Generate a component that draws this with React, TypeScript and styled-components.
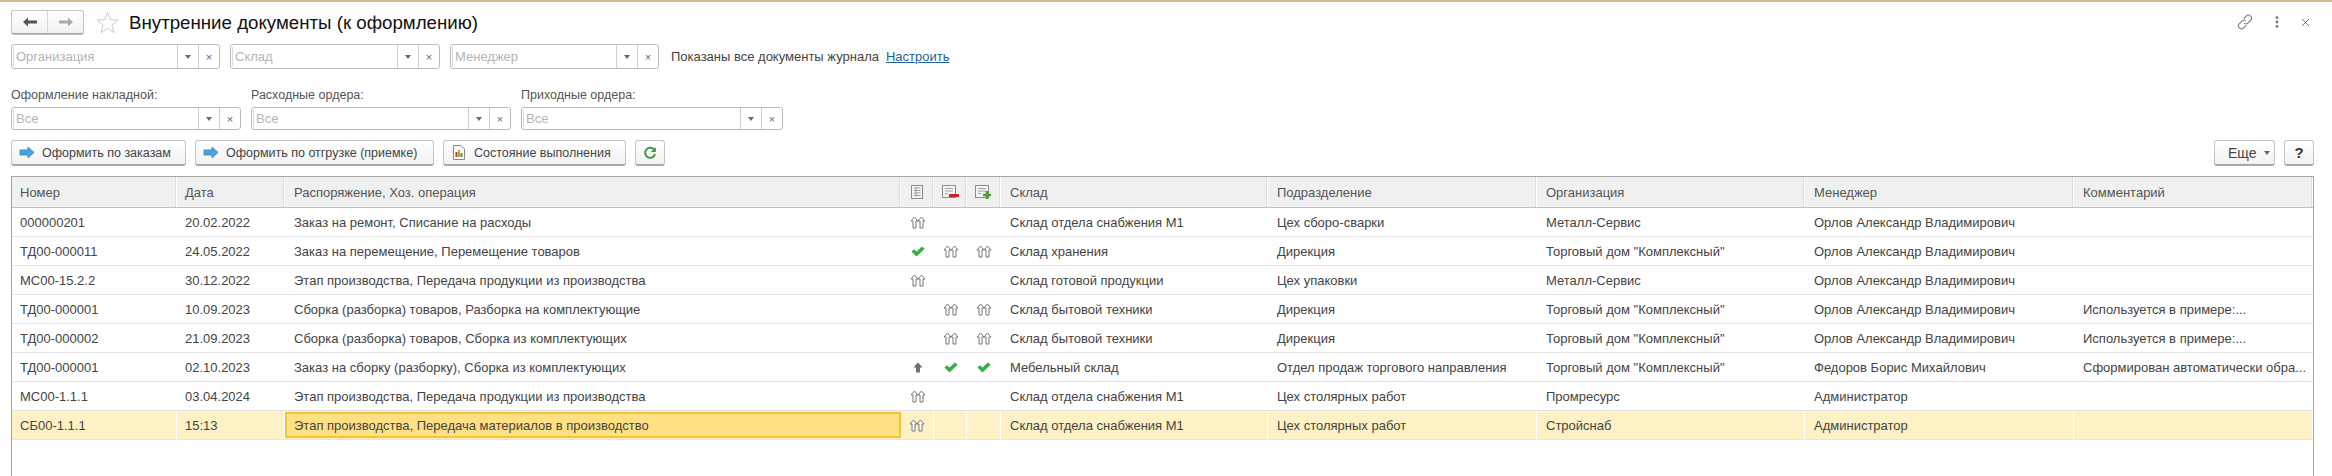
import React from "react";
import styled, { createGlobalStyle } from "styled-components";

const GlobalStyle = createGlobalStyle`
  html, body { margin: 0; padding: 0; background: #fff; }
  body { font-family: "Liberation Sans", Arial, sans-serif; font-size: 13px; color: #444; }
`;

const Page = styled.div`
  width: 2332px;
  height: 476px;
  box-sizing: border-box;
  border-top: 2px solid #c9bb94;
  padding: 8px 18px 0 11px;
  display: flex;
  flex-direction: column;
  overflow: hidden;
`;

const TitleRow = styled.div`
  height: 24px;
  display: flex;
  align-items: center;
`;

const NavGroup = styled.div`
  width: 73px;
  height: 24px;
  box-sizing: border-box;
  display: flex;
  border: 1px solid #c4c4c4;
  border-bottom-color: #a8a8a8;
  border-radius: 3px;
  background: linear-gradient(#fff, #f1f1f1);
  box-shadow: 0 1px 0 #bbb;
`;

const NavButton = styled.div<{ $divider?: boolean }>`
  flex: 1;
  display: flex;
  align-items: center;
  justify-content: center;
  border-right: ${(p) => (p.$divider ? "1px solid #d6d6d6" : "none")};
`;

const StarWrap = styled.div`
  margin-left: 12px;
  width: 23px;
  height: 23px;
`;

const Title = styled.h1`
  margin: 2px 0 0 10px;
  font-size: 18.7px;
  font-weight: 400;
  color: #111;
  white-space: nowrap;
`;

const TopIcons = styled.div`
  margin-left: auto;
  display: flex;
  align-items: center;
  gap: 22px;
  margin-right: 4px;
`;

const FilterRow = styled.div`
  margin-top: 10px;
  height: 25px;
  display: flex;
  align-items: center;
  gap: 10px;
`;

const FieldBox = styled.div<{ $width: number; $height: number }>`
  width: ${(p) => p.$width}px;
  height: ${(p) => p.$height}px;
  box-sizing: border-box;
  display: flex;
  border: 1px solid #bcbcbc;
  border-radius: 3px;
  background: #fff;
`;

const FieldText = styled.div`
  flex: 1;
  min-width: 0;
  padding-left: 2px;
  display: flex;
  align-items: center;
  color: #b4b4b4;
  border-left: 1px solid #d8d8d8;
  margin: 2px 0 2px 1px;
`;

const FieldBtn = styled.div`
  width: 20px;
  display: flex;
  align-items: center;
  justify-content: center;
  border-left: 1px solid #cfcfcf;
  color: #666;
  font-size: 11px;
`;

const Caret = styled.span`
  width: 0;
  height: 0;
  border-left: 3px solid transparent;
  border-right: 3px solid transparent;
  border-top: 4px solid #666;
`;

const StatusText = styled.span`
  margin-left: 2px;
  color: #444;
  white-space: nowrap;
`;

const SetupLink = styled.a`
  margin-left: -3px;
  color: #1f5f99;
  text-decoration: underline;
`;

const OrderRow = styled.div`
  margin-top: 19px;
  display: flex;
  gap: 10px;
`;

const OrderGroup = styled.div`
  display: flex;
  flex-direction: column;
  gap: 4px;
`;

const OrderLabel = styled.label`
  height: 15px;
  line-height: 15px;
  font-size: 12.5px;
  color: #555;
`;

const ActionRow = styled.div`
  margin-top: 10px;
  height: 26px;
  display: flex;
  gap: 9px;
`;

const ActionButton = styled.div<{ $width: number; $pad?: number }>`
  width: ${(p) => p.$width}px;
  box-sizing: border-box;
  display: flex;
  align-items: center;
  justify-content: ${(p) => (p.$pad === undefined ? "center" : "flex-start")};
  padding-left: ${(p) => p.$pad ?? 0}px;
  gap: 7px;
  border: 1px solid #c4c4c4;
  border-bottom: 2px solid #a9a9a9;
  border-radius: 3px;
  background: linear-gradient(#fff, #f3f3f3);
  font-size: 12.5px;
  color: #444;
  white-space: nowrap;
`;

const IconSlot = styled.span`
  width: 16px;
  display: flex;
  align-items: center;
  justify-content: center;
`;

const Spacer = styled.div`
  flex: 1;
`;

const MoreLabel = styled.span`
  font-size: 14px;
`;

const QuestionMark = styled.span`
  font-size: 15px;
  font-weight: 700;
  color: #333;
`;

const Table = styled.div`
  margin-top: 10px;
  flex: 1;
  border: 1px solid #a6a6a6;
  border-bottom: none;
`;

const columns = "165px 108px 616px 33px 33px 34px 267px 269px 268px 269px 1fr";

const HeaderRow = styled.div`
  display: grid;
  grid-template-columns: ${columns};
  height: 31px;
  background: #f0f0f0;
  border-bottom: 1px solid #c0c0c0;
  box-sizing: border-box;
`;

const HeadCell = styled.div<{ $icon?: boolean }>`
  box-sizing: border-box;
  display: flex;
  align-items: center;
  justify-content: ${(p) => (p.$icon ? "center" : "flex-start")};
  padding-left: ${(p) => (p.$icon ? 0 : 9)}px;
  border-right: 1px solid #fff;
  box-shadow: inset -1px 0 0 #dcdcdc;
  color: #555;

  &:nth-child(-n + 2) {
    padding-left: 8px;
  }
`;

const Row = styled.div<{ $current?: boolean }>`
  display: grid;
  grid-template-columns: ${columns};
  height: 29px;
  box-sizing: border-box;
  border-bottom: 1px solid #e4e4e4;
  background: ${(p) => (p.$current ? "#fdf1c5" : "#fff")};
`;

const Cell = styled.div<{ $icon?: boolean; $current?: boolean; $active?: boolean }>`
  box-sizing: border-box;
  min-width: 0;
  display: flex;
  align-items: center;
  justify-content: ${(p) => (p.$icon ? "center" : "flex-start")};
  padding-left: ${(p) => (p.$icon ? 0 : 9)}px;
  white-space: nowrap;
  overflow: hidden;
  border-right: ${(p) => (p.$current ? "1px solid #fff" : "none")};

  &:nth-child(-n + 2) {
    padding-left: 8px;
  }

  ${(p) =>
    p.$active &&
    `
    background: #ffe083;
    border: 2px solid #f0c73a;
    padding-left: 7px;
    margin: 1px 0;
    color: #444;
  `}
`;

type Mark = "" | "open" | "done" | "up";

interface DocRow {
  num: string;
  date: string;
  order: string;
  marks: [Mark, Mark, Mark];
  wh: string;
  dep: string;
  org: string;
  man: string;
  note: string;
}

const rows: DocRow[] = [
  { num: "000000201", date: "20.02.2022", order: "Заказ на ремонт, Списание на расходы", marks: ["open", "", ""], wh: "Склад отдела снабжения М1", dep: "Цех сборо-сварки", org: "Металл-Сервис", man: "Орлов Александр Владимирович", note: "" },
  { num: "ТД00-000011", date: "24.05.2022", order: "Заказ на перемещение, Перемещение товаров", marks: ["done", "open", "open"], wh: "Склад хранения", dep: "Дирекция", org: 'Торговый дом "Комплексный"', man: "Орлов Александр Владимирович", note: "" },
  { num: "МС00-15.2.2", date: "30.12.2022", order: "Этап производства, Передача продукции из производства", marks: ["open", "", ""], wh: "Склад готовой продукции", dep: "Цех упаковки", org: "Металл-Сервис", man: "Орлов Александр Владимирович", note: "" },
  { num: "ТД00-000001", date: "10.09.2023", order: "Сборка (разборка) товаров, Разборка на комплектующие", marks: ["", "open", "open"], wh: "Склад бытовой техники", dep: "Дирекция", org: 'Торговый дом "Комплексный"', man: "Орлов Александр Владимирович", note: "Используется в примере:..." },
  { num: "ТД00-000002", date: "21.09.2023", order: "Сборка (разборка) товаров, Сборка из комплектующих", marks: ["", "open", "open"], wh: "Склад бытовой техники", dep: "Дирекция", org: 'Торговый дом "Комплексный"', man: "Орлов Александр Владимирович", note: "Используется в примере:..." },
  { num: "ТД00-000001", date: "02.10.2023", order: "Заказ на сборку (разборку), Сборка из комплектующих", marks: ["up", "done", "done"], wh: "Мебельный склад", dep: "Отдел продаж торгового направления", org: 'Торговый дом "Комплексный"', man: "Федоров Борис Михайлович", note: "Сформирован автоматически обра..." },
  { num: "МС00-1.1.1", date: "03.04.2024", order: "Этап производства, Передача продукции из производства", marks: ["open", "", ""], wh: "Склад отдела снабжения М1", dep: "Цех столярных работ", org: "Промресурс", man: "Администратор", note: "" },
  { num: "СБ00-1.1.1", date: "15:13", order: "Этап производства, Передача материалов в производство", marks: ["open", "", ""], wh: "Склад отдела снабжения М1", dep: "Цех столярных работ", org: "Стройснаб", man: "Администратор", note: "" },
];

const ArrowNav = ({ dir, color }: { dir: "left" | "right"; color: string }) => (
  <svg width="16" height="12" viewBox="0 0 16 12">
    <path
      d={dir === "left" ? "M1 6 L6 1.5 V4.5 H15 V7.5 H6 V10.5 Z" : "M15 6 L10 1.5 V4.5 H1 V7.5 H10 V10.5 Z"}
      fill={color}
    />
  </svg>
);

const Star = () => (
  <svg width="23" height="23" viewBox="0 0 23 23">
    <path
      d="M11.5 1.5 L14.3 8.6 L22 9.1 L16 14 L18 21.6 L11.5 17.4 L5 21.6 L7 14 L1 9.1 L8.7 8.6 Z"
      fill="#fff"
      stroke="#c9c9c9"
    />
  </svg>
);

const LinkIcon = () => (
  <svg width="16" height="16" viewBox="0 0 16 16" fill="none" stroke="#777" strokeWidth="1.1">
    <path d="M6.8 4.6 L9.6 1.8 a2.5 2.5 0 0 1 3.9 0.4 L14 2.6 a2.6 2.6 0 0 1 0 3.4 L10.8 9.2 a2.4 2.4 0 0 1 -3.5 0" />
    <path d="M9.2 11.4 L6.4 14.2 a2.5 2.5 0 0 1 -3.9 -0.4 L2 13.4 a2.6 2.6 0 0 1 0 -3.4 L5.2 6.8 a2.4 2.4 0 0 1 3.5 0" />
  </svg>
);

const DotsIcon = () => (
  <svg width="4" height="12" viewBox="0 0 4 12" fill="#777">
    <circle cx="2" cy="1.6" r="1.4" />
    <circle cx="2" cy="6" r="1.4" />
    <circle cx="2" cy="10.4" r="1.4" />
  </svg>
);

const CloseIcon = () => (
  <svg width="9" height="9" viewBox="0 0 9 9" stroke="#777" strokeWidth="1">
    <path d="M1 1 L8 8 M8 1 L1 8" />
  </svg>
);

const BlueArrow = () => (
  <svg width="16" height="13" viewBox="0 0 16 13">
    <path d="M1 4 H9 V1 L15 6.5 L9 12 V9 H1 Z" fill="#4aa3dc" stroke="#3280b8" strokeWidth="0.8" />
  </svg>
);

const ReportIcon = () => (
  <svg width="12" height="15" viewBox="0 0 12 15">
    <path d="M0.5 0.5 H8 L11.5 4 V14.5 H0.5 Z" fill="#fff" stroke="#8a8a8a" />
    <rect x="2.5" y="7" width="2" height="5" fill="#c33" />
    <rect x="5" y="5" width="2" height="7" fill="#c9a227" />
    <rect x="7.5" y="8" width="2" height="4" fill="#3a9a3a" />
  </svg>
);

const RefreshIcon = () => (
  <svg width="14" height="14" viewBox="0 0 14 14" fill="none">
    <path d="M11.4 4.2 A5 5 0 1 0 12 8" stroke="#3c9a3c" strokeWidth="2" />
    <path d="M12.8 1 V6 H7.8 Z" fill="#3c9a3c" />
  </svg>
);

const ColIconBase = ({ sign }: { sign?: "minus" | "plus" }) => (
  <svg width="17" height="14" viewBox="0 0 17 14">
    <rect x="0.5" y="0.5" width="13" height="12" fill="#f6f6f6" stroke="#8c8c8c" />
    <path d="M3 3.5 H11 M3 6 H11 M3 8.5 H6" stroke="#a0a0a0" />
    {sign === "minus" && <rect x="7" y="9" width="10" height="3" fill="#c8242b" />}
    {sign === "plus" && <path d="M12 6 V14 M8 10 H16" stroke="#4aa02c" strokeWidth="2.6" />}
  </svg>
);

const ColIconGrid = () => (
  <svg width="12" height="14" viewBox="0 0 12 14">
    <rect x="0.5" y="0.5" width="11" height="13" fill="#f6f6f6" stroke="#8c8c8c" />
    <path d="M2.5 3 H9.5 M2.5 5.5 H9.5 M2.5 8 H9.5 M2.5 10.5 H9.5 M5 2.5 V11.5" stroke="#a0a0a0" />
  </svg>
);

const DoubleUp = () => (
  <svg width="16" height="13" viewBox="0 0 16 13" fill="#fff" stroke="#777" strokeWidth="1">
    <path d="M4.5 1 L8 5 H6 V12 H3 V5 H1 Z" />
    <path d="M11.5 1 L15 5 H13 V12 H10 V5 H8 Z" />
  </svg>
);

const CheckMark = () => (
  <svg width="14" height="11" viewBox="0 0 14 11">
    <path d="M0.5 5.5 L3 3.2 L5.5 5.6 L11 0.4 L13.6 2.8 L5.5 10.6 Z" fill="#36ad45" />
  </svg>
);

const SolidUp = () => (
  <svg width="10" height="11" viewBox="0 0 10 11">
    <path d="M5 0.5 L9.5 5.5 H7 V10.5 H3 V5.5 H0.5 Z" fill="#6f6f6f" />
  </svg>
);

const MarkIcon = ({ mark }: { mark: Mark }) => {
  if (mark === "open") return <DoubleUp />;
  if (mark === "done") return <CheckMark />;
  if (mark === "up") return <SolidUp />;
  return null;
};

const Field = ({ text, width, height = 25 }: { text: string; width: number; height?: number }) => (
  <FieldBox $width={width} $height={height}>
    <FieldText>{text}</FieldText>
    <FieldBtn>
      <Caret />
    </FieldBtn>
    <FieldBtn>×</FieldBtn>
  </FieldBox>
);

const App: React.FC = () => (
  <Page>
    <GlobalStyle />
    <TitleRow>
      <NavGroup>
        <NavButton $divider>
          <ArrowNav dir="left" color="#555" />
        </NavButton>
        <NavButton>
          <ArrowNav dir="right" color="#aaa" />
        </NavButton>
      </NavGroup>
      <StarWrap>
        <Star />
      </StarWrap>
      <Title>Внутренние документы (к оформлению)</Title>
      <TopIcons>
        <LinkIcon />
        <DotsIcon />
        <CloseIcon />
      </TopIcons>
    </TitleRow>

    <FilterRow>
      <Field text="Организация" width={209} />
      <Field text="Склад" width={210} />
      <Field text="Менеджер" width={209} />
      <StatusText>Показаны все документы журнала</StatusText>
      <SetupLink>Настроить</SetupLink>
    </FilterRow>

    <OrderRow>
      <OrderGroup>
        <OrderLabel>Оформление накладной:</OrderLabel>
        <Field text="Все" width={230} height={23} />
      </OrderGroup>
      <OrderGroup>
        <OrderLabel>Расходные ордера:</OrderLabel>
        <Field text="Все" width={260} height={23} />
      </OrderGroup>
      <OrderGroup>
        <OrderLabel>Приходные ордера:</OrderLabel>
        <Field text="Все" width={262} height={23} />
      </OrderGroup>
    </OrderRow>

    <ActionRow>
      <ActionButton $width={175} $pad={7}>
        <IconSlot>
          <BlueArrow />
        </IconSlot>
        Оформить по заказам
      </ActionButton>
      <ActionButton $width={239} $pad={7}>
        <IconSlot>
          <BlueArrow />
        </IconSlot>
        Оформить по отгрузке (приемке)
      </ActionButton>
      <ActionButton $width={183} $pad={7}>
        <IconSlot>
          <ReportIcon />
        </IconSlot>
        Состояние выполнения
      </ActionButton>
      <ActionButton $width={30}>
        <RefreshIcon />
      </ActionButton>
      <Spacer />
      <ActionButton $width={61} $pad={13}>
        <MoreLabel>Еще</MoreLabel>
        <Caret />
      </ActionButton>
      <ActionButton $width={30}>
        <QuestionMark>?</QuestionMark>
      </ActionButton>
    </ActionRow>

    <Table>
      <HeaderRow>
        <HeadCell>Номер</HeadCell>
        <HeadCell>Дата</HeadCell>
        <HeadCell>Распоряжение, Хоз. операция</HeadCell>
        <HeadCell $icon>
          <ColIconGrid />
        </HeadCell>
        <HeadCell $icon>
          <ColIconBase sign="minus" />
        </HeadCell>
        <HeadCell $icon>
          <ColIconBase sign="plus" />
        </HeadCell>
        <HeadCell>Склад</HeadCell>
        <HeadCell>Подразделение</HeadCell>
        <HeadCell>Организация</HeadCell>
        <HeadCell>Менеджер</HeadCell>
        <HeadCell>Комментарий</HeadCell>
      </HeaderRow>
      {rows.map((r, i) => {
        const current = i === rows.length - 1;
        return (
          <Row key={i} $current={current}>
            <Cell $current={current}>{r.num}</Cell>
            <Cell $current={current}>{r.date}</Cell>
            <Cell $active={current}>{r.order}</Cell>
            {r.marks.map((m, j) => (
              <Cell key={j} $icon $current={current}>
                <MarkIcon mark={m} />
              </Cell>
            ))}
            <Cell $current={current}>{r.wh}</Cell>
            <Cell $current={current}>{r.dep}</Cell>
            <Cell $current={current}>{r.org}</Cell>
            <Cell $current={current}>{r.man}</Cell>
            <Cell $current={current}>{r.note}</Cell>
          </Row>
        );
      })}
    </Table>
  </Page>
);

export default App;
